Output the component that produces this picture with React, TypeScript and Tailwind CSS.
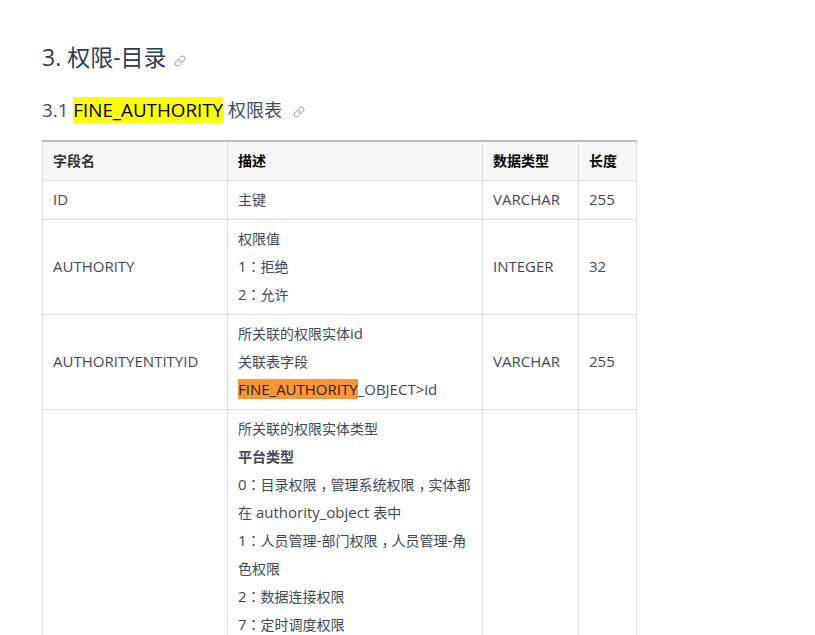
import React from "react";
import { Link } from "lucide-react";

function Anchor({ className }: { className: string }) {
  return <Link className={"inline-block w-[12px] h-[12px] text-[#8a97a8] align-[-1px] " + className} strokeWidth={2} />;
}

// latin runs are 15px, chinese runs sit at 14px
function Zh({ children }: { children: React.ReactNode }) {
  return <span className="text-[14px] leading-none">{children}</span>;
}

// centred fullwidth colon, comma pushed to the middle of its box
function Colon() {
  return <span className="text-[14px] leading-none font-['Noto_Sans_CJK_TC',sans-serif]">：</span>;
}
function Comma() {
  return <span className="pl-[4px] tracking-[-4px] text-[14px] leading-none">，</span>;
}

const th = "border border-[#dddddd] border-t-2 border-t-[#bbbbbb] px-[10px] h-[39px] text-left text-[14px] font-bold align-middle";
const td = "border border-[#dddddd] px-[10px] pt-[4px] pb-[6px] text-[15px] leading-[28px] align-middle";

export default function App() {
  return (
    <div className="h-[635px] w-[815px] overflow-hidden bg-white text-[#3f4a58] font-['Open_Sans','Noto_Sans_CJK_SC',sans-serif]">
      <div className="pl-[42px] pt-[41px]">
        <h2 className="text-[23px] leading-[32px] font-normal text-[#2c3e50]">
          3. 权限-目录
          <Anchor className="ml-[7px]" />
        </h2>
        <h3 className="mt-[24px] h-[26px] text-[18.8px] leading-[26px] font-normal text-[#3f4d5e]">
          3.1 <span className="bg-[#ffff00] text-black">FINE_AUTHORITY</span> <span className="text-[18px] leading-none">权限表</span>
          <Anchor className="ml-[11px]" />
        </h3>
        <table className="mt-[17px] w-[594px] table-fixed border-collapse">
          <colgroup>
            <col className="w-[185px]" />
            <col className="w-[255px]" />
            <col className="w-[96px]" />
            <col className="w-[58px]" />
          </colgroup>
          <thead>
            <tr className="bg-[#f7f7f7]">
              <th className={th + " text-[#333333]"}>字段名</th>
              <th className={th + " text-black"}>描述</th>
              <th className={th + " text-black"}>数据类型</th>
              <th className={th + " text-black"}>长度</th>
            </tr>
          </thead>
          <tbody>
            <tr>
              <td className={td}>ID</td>
              <td className={td}><Zh>主键</Zh></td>
              <td className={td}>VARCHAR</td>
              <td className={td}>255</td>
            </tr>
            <tr>
              <td className={td}>AUTHORITY</td>
              <td className={td}>
                <div><Zh>权限值</Zh></div>
                <div>1<Colon /><Zh>拒绝</Zh></div>
                <div>2<Colon /><Zh>允许</Zh></div>
              </td>
              <td className={td}>INTEGER</td>
              <td className={td}>32</td>
            </tr>
            <tr>
              <td className={td}>AUTHORITYENTITYID</td>
              <td className={td}>
                <div><Zh>所关联的权限实体</Zh>id</div>
                <div><Zh>关联表字段</Zh></div>
                <div>
                  <span className="bg-[#ff9632] text-[#222222]">FINE_AUTHORITY</span>_OBJECT&gt;id
                </div>
              </td>
              <td className={td}>VARCHAR</td>
              <td className={td}>255</td>
            </tr>
            <tr>
              <td className={td}></td>
              <td className={td}>
                <div><Zh>所关联的权限实体类型</Zh></div>
                <div className="font-bold"><Zh>平台类型</Zh></div>
                <div>0<Colon /><Zh>目录权限</Zh><Comma /><Zh>管理系统权限</Zh><Comma /><Zh>实体都</Zh><Zh>在</Zh> authority_object <Zh>表中</Zh></div>
                <div>1<Colon /><Zh>人员管理</Zh>-<Zh>部门权限</Zh><Comma /><Zh>人员管理</Zh>-<Zh>角</Zh><Zh>色权限</Zh></div>
                <div>2<Colon /><Zh>数据连接权限</Zh></div>
                <div>7<Colon /><Zh>定时调度权限</Zh></div>
              </td>
              <td className={td}></td>
              <td className={td}></td>
            </tr>
          </tbody>
        </table>
      </div>
    </div>
  );
}
